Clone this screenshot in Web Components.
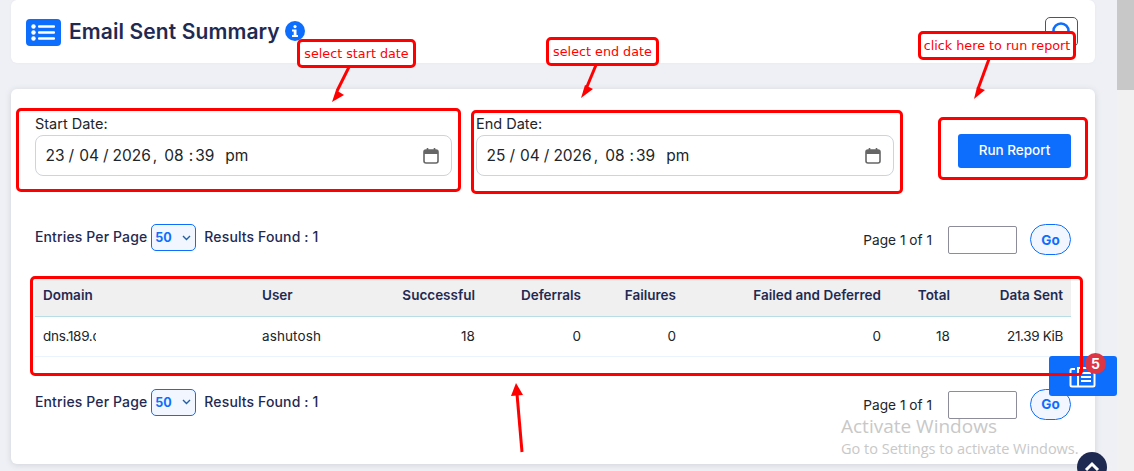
<!DOCTYPE html>
<html>
<head>
<meta charset="utf-8">
<title>Email Sent Summary</title>
<style>
html, body { margin: 0; height: 471px; overflow: hidden; }
body { font-family: Inter, "Liberation Sans", sans-serif; background: #eef0f5; color: #1f2a52; }
</style>
</head>
<body>
<report-page></report-page>

<script>
const CAL = `<svg width="16" height="17" viewBox="0 0 16 17" fill="none"><rect x="1" y="3" width="14" height="13" rx="2" stroke="#666" stroke-width="1.6"/><rect x="1" y="3" width="14" height="4" fill="#666"/><path d="M4.5 1v3M11.5 1v3" stroke="#666" stroke-width="1.6"/></svg>`;

class PageHeader extends HTMLElement {
  constructor() {
    super();
    this.attachShadow({ mode: 'open' }).innerHTML = `
<style>
:host { display: flex; align-items: center; height: 63px; box-sizing: border-box; padding: 0 17px 0 15px; background: #fff; border-radius: 6px; box-shadow: 0 0 2px #e3e5ec; }
.logo { width: 35px; height: 27px; background: #0d6efd; border-radius: 4px; display: flex; align-items: center; justify-content: center; margin-top: 1px; }
h1 { margin: 0 5px 0 8px; font-size: 21px; font-weight: 600; color: #1f2a52; letter-spacing: .1px; white-space: nowrap; }
.info { width: 20px; height: 20px; border-radius: 50%; background: #0d6efd; display: flex; align-items: center; justify-content: center; margin-top: -2px; }
.search { margin-left: auto; width: 33px; height: 30px; box-sizing: border-box; border: 1px solid #555; border-radius: 5px; display: flex; align-items: center; justify-content: center; }
</style>
<div class="logo"><svg width="25" height="17" viewBox="0 0 25 17" fill="#fff"><circle cx="2.5" cy="2.5" r="2.2"/><circle cx="2.5" cy="8.5" r="2.2"/><circle cx="2.5" cy="14.5" r="2.2"/><rect x="7" y="1.2" width="17" height="2.6" rx="1"/><rect x="7" y="7.2" width="17" height="2.6" rx="1"/><rect x="7" y="13.2" width="17" height="2.6" rx="1"/></svg></div>
<h1>Email Sent Summary</h1>
<div class="info"><svg width="8" height="12" viewBox="0 0 8 12" fill="#fff"><circle cx="4" cy="1.6" r="1.6"/><path d="M1 4.5h4.5V10H7v2H1v-2h1.7V6.5H1z"/></svg></div>
<div class="search"><svg width="22" height="22" viewBox="0 0 22 22" fill="none" stroke="#0d6efd" stroke-width="2.6"><circle cx="10" cy="10" r="7.5"/><path d="M15.5 15.500l5 5"/></svg></div>`;
  }
}

// gaps before each piece of the date, same as the browser's datetime-local editor
const DATE_GAPS = [0, 4, 5, 4, 4, 2, 7, 5, 2, 11];

class DateField extends HTMLElement {
  constructor() {
    super();
    this.attachShadow({ mode: 'open' }).innerHTML = `
<style>
:host { display: block; width: 418px; }
label { display: block; font-size: 14.5px; line-height: 20px; color: #212529; height: 21px; margin-top: -10px; }
.box { height: 41px; box-sizing: border-box; border: 1px solid #ced4da; border-radius: 8px; display: flex; align-items: center; padding: 0 12px 0 9.500px; font-size: 15.5px; color: #212529; background: #fff; white-space: pre; }
.val { flex: 1; display: flex; }
svg { display: block; }
</style>
<label></label>
<div class="box"><span class="val"></span>${CAL}</div>`;
  }
  connectedCallback() {
    this.shadowRoot.querySelector('label').textContent = this.getAttribute('label');
    const parts = this.getAttribute('value').split(' ');
    this.shadowRoot.querySelector('.val').innerHTML = parts.map((p, i) => `<span style="margin-left:${DATE_GAPS[i]}px">${p}</span>`).join('');
  }
}

class PagerBar extends HTMLElement {
  constructor() {
    super();
    this.attachShadow({ mode: 'open' }).innerHTML = `
<style>
:host { display: flex; align-items: flex-start; height: 30px; font-size: 14px; color: #1f2a52; }
.txt { line-height: 26px; font-weight: 500; white-space: nowrap; letter-spacing: .13px; }
.sel { width: 45px; height: 27px; box-sizing: border-box; margin: 0 8px 0 4px; border: 1px solid #0d6efd; border-radius: 5px; background: #f1f6ff; color: #0d6efd; font-weight: 700; font-size: 12.500px; display: flex; align-items: center; justify-content: space-between; padding: 0 4px 0 3px; }
.right { margin-left: auto; display: flex; align-items: flex-start; }
.page { color: #212529; line-height: 32px; margin-right: 16px; font-weight: 400; white-space: nowrap; font-size: 13.700px; }
.inp { width: 69px; height: 28px; box-sizing: border-box; border: 1px solid #8d8d99; border-radius: 2px; background: #fff; margin-right: 13px; margin-top: 2px; }
.go { width: 41px; height: 31px; box-sizing: border-box; border: 1px solid #0d6efd; border-radius: 16px; background: #f1f6ff; color: #0d6efd; font-weight: 700; font-size: 13.500px; display: flex; align-items: center; justify-content: center; }
</style>
<span class="txt">Entries Per Page</span>
<div class="sel">50<svg width="9" height="6" viewBox="0 0 9 6" fill="none" stroke="#1f5fa8" stroke-width="1.4"><path d="M1 1l3.500 3.500L8 1"/></svg></div>
<span class="txt">Results Found : 1</span>
<div class="right"><span class="page">Page 1 of 1</span><div class="inp"></div><div class="go">Go</div></div>`;
  }
}

class ReportTable extends HTMLElement {
  constructor() {
    super();
    const cols = ['Domain', 'User', 'Successful', 'Deferrals', 'Failures', 'Failed and Deferred', 'Total', 'Data Sent'];
    const row = ['', 'ashutosh', '18', '0', '0', '0', '18', '21.39 KiB'];
    this.attachShadow({ mode: 'open' }).innerHTML = `
<style>
:host { display: block; font-size: 13.5px; }
table { width: 1036px; border-collapse: collapse; table-layout: fixed; }
th { height: 38px; padding: 0 8px 3px; box-sizing: border-box; background: #f0f0f0; border-bottom: 1px solid #b9dde6; font-weight: 600; color: #1f2a52; text-align: right; white-space: nowrap; }
td { height: 40px; padding: 0 8px 1px; box-sizing: border-box; border-bottom: 1px solid #ebf3fd; color: #212529; text-align: right; white-space: nowrap; letter-spacing: .1px; }
td:last-child { letter-spacing: -.35px; }
th:nth-child(-n+2), td:nth-child(-n+2) { text-align: left; }
.clip { display: inline-block; width: 53px; overflow: hidden; vertical-align: bottom; letter-spacing: -.3px; }
</style>
<table>
<colgroup><col style="width:219px"><col style="width:129px"><col style="width:100px"><col style="width:106px"><col style="width:95px"><col style="width:205px"><col style="width:69px"><col style="width:113px"></colgroup>
<thead><tr>${cols.map(c => `<th>${c}</th>`).join('')}</tr></thead>
<tbody><tr>${row.map((c, i) => i === 0 ? `<td><span class="clip">dns.189.com</span></td>` : `<td>${c}</td>`).join('')}</tr></tbody>
</table>`;
  }
}

class ReportCard extends HTMLElement {
  constructor() {
    super();
    this.attachShadow({ mode: 'open' }).innerHTML = `
<style>
:host { display: block; height: 375px; margin-top: 26px; box-sizing: border-box; padding: 35px 24px 0; background: #fff; border-radius: 6px; box-shadow: 0 1px 6px #d0d2da; }
.form { display: flex; align-items: flex-start; height: 100px; }
date-field + date-field { margin-left: 24px; }
.first { width: 417px; }
.run { margin: 10px 0 0 64px; width: 113px; height: 34px; box-sizing: border-box; padding-bottom: 2px; background: #0d6efd; border-radius: 3px; color: #fff; font-size: 13.5px; font-weight: 500; display: flex; align-items: center; justify-content: center; }
report-table { margin: 24px 0 32px; }
</style>
<div class="form">
  <date-field class="first" label="Start Date:" value="23 / 04 / 2026 , 08 : 39 pm"></date-field>
  <date-field label="End Date:" value="25 / 04 / 2026 , 08 : 39 pm"></date-field>
  <div class="run">Run Report</div>
</div>
<pager-bar></pager-bar>
<report-table></report-table>
<pager-bar></pager-bar>`;
  }
}

// red annotations sit on top of the screenshot, so they go on a free canvas
class MarkBox extends HTMLElement {
  constructor() {
    super();
    this.attachShadow({ mode: 'open' }).innerHTML = `
<style>
:host { position: absolute; box-sizing: border-box; border: 3px solid #f00; border-radius: 5px; display: flex; align-items: center; justify-content: center; font: 12.75px "DejaVu Sans", sans-serif; color: #f00; white-space: nowrap; }
:host([label]) { background: #fff; padding-bottom: 1px; }
</style>
<slot></slot>`;
  }
}

class FloatWidgets extends HTMLElement {
  constructor() {
    super();
    this.attachShadow({ mode: 'open' }).innerHTML = `
<style>
:host { display: contents; }
.tool { position: absolute; left: 1049px; top: 356px; width: 68px; height: 40px; background: #0d6efd; border-radius: 3px; z-index: 1; }
.tool svg { position: absolute; left: 20px; top: 8px; }
.badge { position: absolute; left: 1085px; top: 353px; width: 21px; height: 21px; border-radius: 50%; background: #dc3545; color: #fff; font: 700 14px Inter, sans-serif; display: flex; align-items: center; justify-content: center; z-index: 3; }
.up { position: absolute; left: 1077px; top: 452px; width: 30px; height: 30px; border-radius: 50%; background: #1f2a52; z-index: 3; }
.up svg { position: absolute; left: 7px; top: 9px; }
.wm { position: absolute; left: 841px; top: 414px; color: #c8c8c8; font-family: "Open Sans", sans-serif; white-space: nowrap; z-index: 3; }
.wm div:first-child { font-size: 19px; line-height: 24px; }
.wm div:last-child { font-size: 14.5px; line-height: 20px; margin-top: 1px; }
</style>
<div class="tool"><svg width="28" height="24" viewBox="0 0 28 24" fill="none" stroke="#fff" stroke-width="2"><path d="M6 5H3a1.500 1.500 0 0 0-1.500 1.500V21A1.500 1.500 0 0 0 3 22.500h21a1.500 1.500 0 0 0 1.500-1.500V4H9v18"/><path d="M12 9h10M12 13h10M12 17h10"/></svg></div>
<div class="badge">5</div>
<div class="up"><svg width="16" height="11" viewBox="0 0 16 11" fill="none" stroke="#fff" stroke-width="3"><path d="M2 9l6-6 6 6"/></svg></div>
<div class="wm"><div>Activate Windows</div><div>Go to Settings to activate Windows.</div></div>`;
  }
}

class ReportPage extends HTMLElement {
  constructor() {
    super();
    const marks = [
      [16, 108, 445, 84], [471, 110, 432, 84], [938, 117, 150, 63], [30, 276, 1053, 100]
    ];
    const notes = [
      [297, 39, 119, 29, 'select start date'],
      [546, 37, 113, 29, 'select end date'],
      [918, 31, 158, 29, 'click here to run report']
    ];
    const pos = (x, y, w, h) => `left:${x}px;top:${y}px;width:${w}px;height:${h}px`;
    this.attachShadow({ mode: 'open' }).innerHTML = `
<style>
:host { display: flex; height: 471px; position: relative; overflow: hidden; }
main { flex: 1; padding: 0 22px 0 11px; }
.bar { width: 17px; background: #f1f1f1; }
.thumb { height: 90px; background: #c8c8c8; }
svg.arrows { position: absolute; left: 0; top: 0; z-index: 2; }
mark-box { z-index: 2; }
</style>
<main>
  <page-header></page-header>
  <report-card></report-card>
</main>
<div class="bar"><div class="thumb"></div></div>
<float-widgets></float-widgets>
${marks.map(m => `<mark-box style="${pos(...m)}"></mark-box>`).join('')}
${notes.map(n => `<mark-box label style="${pos(n[0], n[1], n[2], n[3])}">${n[4]}</mark-box>`).join('')}
<svg class="arrows" width="1134" height="471" fill="#f00" stroke="none">
  <path d="M349 67l-12 24" stroke="#f00" stroke-width="3"/><path d="M332 102l12-7-8-5z"/>
  <path d="M596 65l-10 24" stroke="#f00" stroke-width="3"/><path d="M581 98l12-9-8-4z"/>
  <path d="M989 59l-11 30" stroke="#f00" stroke-width="3"/><path d="M974 99l11-9-8-3z"/>
  <path d="M522 452l-5-58" stroke="#f00" stroke-width="3"/><path d="M516 383l-5 13 12-1z"/>
</svg>`;
  }
}

customElements.define('page-header', PageHeader);
customElements.define('date-field', DateField);
customElements.define('pager-bar', PagerBar);
customElements.define('report-table', ReportTable);
customElements.define('report-card', ReportCard);
customElements.define('mark-box', MarkBox);
customElements.define('float-widgets', FloatWidgets);
customElements.define('report-page', ReportPage);
</script>
</body>
</html>
